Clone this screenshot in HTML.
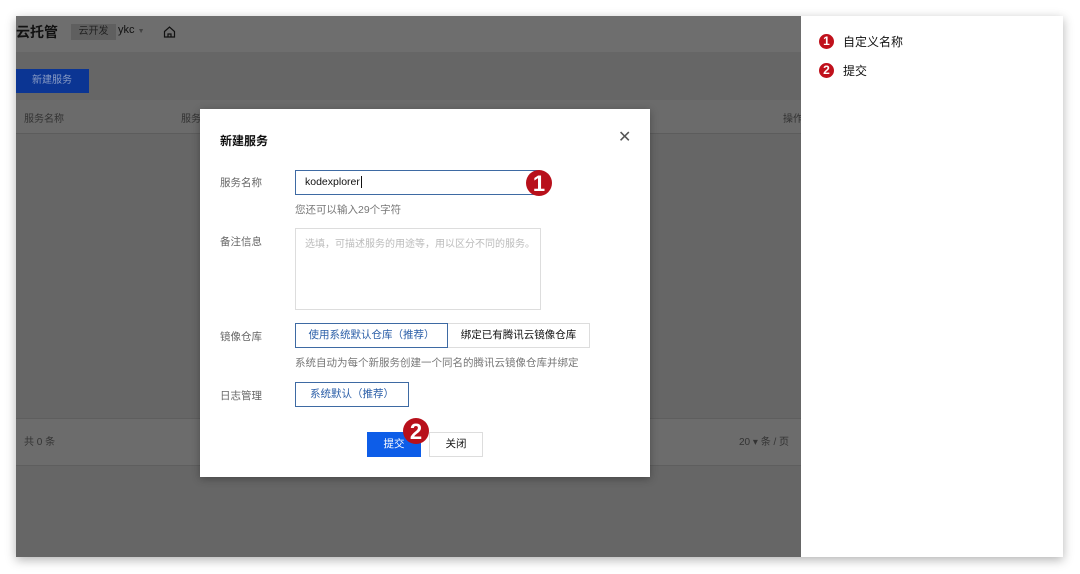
<!DOCTYPE html>
<html><head><meta charset="utf-8"><style>
*{margin:0;padding:0;box-sizing:border-box}
body{width:1080px;height:574px;background:#fff;position:relative;overflow:hidden;font-family:"Liberation Sans","Noto Sans CJK SC",sans-serif;}
.win{position:absolute;left:16px;top:16px;width:1047px;height:541px;box-shadow:0 3px 10px rgba(0,0,0,.3);background:#fff;overflow:hidden}
.gray{position:absolute;left:0;top:0;width:785px;height:541px;background:#666}
.abs{position:absolute;white-space:nowrap}
.side{position:absolute;left:785px;top:0;width:262px;height:541px;background:#fff}
.badge{position:absolute;width:26px;height:26px;border-radius:50%;background:#b8101b;color:#fff;font-weight:bold;font-size:22px;text-align:center;line-height:27px;font-family:"Liberation Sans",sans-serif}
.sb{position:absolute;width:15px;height:15px;border-radius:50%;background:#c0111c;color:#fff;font-weight:bold;font-size:12px;text-align:center;line-height:15px}
.dlg{position:absolute;left:200px;top:109px;width:450px;height:368px;background:#fff;box-shadow:0 2px 8px rgba(0,0,0,.3)}
.lbl{position:absolute;left:20px;font-size:10.5px;color:#666;white-space:nowrap}
.t{position:absolute;font-size:10.5px;white-space:nowrap}
</style></head><body>
<div class="win">
 <div class="gray">
  <div class="abs" style="left:0;top:0;width:785px;height:36px;background:#6e6e6e"></div>
  <div class="abs" style="left:0;top:6px;font-size:14px;font-weight:bold;color:#111">云托管</div>
  <div class="abs" style="left:55px;top:8px;width:45px;height:16px;background:#5f5f5f;font-size:10px;color:#222;text-align:center;line-height:16px">云开发</div>
  <div class="abs" style="left:102px;top:8px;font-size:11px;color:#111">ykc <span style="font-size:7px;color:#444">▼</span></div>
  <svg class="abs" style="left:147px;top:9px" width="13" height="13" viewBox="0 0 13 13"><path d="M1.5 6.5L6.5 2l5 4.5V12h-10z M5 12V9h3v3" fill="none" stroke="#111" stroke-width="1.2"/></svg>
  <div class="abs" style="left:0;top:53px;width:73px;height:24px;background:#0b3593;color:#8a9cc4;font-size:10px;line-height:24px;padding-left:16px">新建服务</div>
  <div class="abs" style="left:0;top:84px;width:785px;height:34px;background:#6b6b6b;border-bottom:1px solid #5c5c5c"></div>
  <div class="abs" style="left:8px;top:94px;font-size:10px;color:#333">服务名称</div>
  <div class="abs" style="left:165px;top:94px;font-size:10px;color:#333">服务</div>
  <div class="abs" style="left:767px;top:94px;font-size:10px;color:#333">操作</div>
  <div class="abs" style="left:0;top:402px;width:785px;height:48px;background:#6c6c6c;border-top:1px solid #5e5e5e;border-bottom:1px solid #5e5e5e"></div>
  <div class="abs" style="left:8px;top:417px;font-size:10px;color:#333">共 0 条</div>
  <div class="abs" style="left:723px;top:417px;font-size:10px;color:#333">20 ▾ 条 / 页</div>
 </div>
 <div class="side">
  <div class="sb" style="left:18px;top:18px">1</div>
  <div class="abs" style="left:42px;top:17px;font-size:12px;color:#111">自定义名称</div>
  <div class="sb" style="left:18px;top:47px">2</div>
  <div class="abs" style="left:42px;top:46px;font-size:12px;color:#111">提交</div>
 </div>
</div>
<div class="dlg">
 <div class="abs" style="left:20px;top:23px;font-size:12px;font-weight:bold;color:#111">新建服务</div>
 <div class="abs" style="left:418px;top:21px;font-size:16px;color:#555;line-height:16px">✕</div>
 <div class="lbl" style="top:66px">服务名称</div>
 <div class="abs" style="left:95px;top:61px;width:245px;height:25px;border:1px solid #3e6aa3;font-size:10.5px;color:#111;line-height:23px;padding-left:9px">kodexplorer<span style="border-left:1px solid #111;margin-left:1px"></span></div>
 <div class="t" style="left:95px;top:93px;color:#777">您还可以输入29个字符</div>
 <div class="lbl" style="top:125px">备注信息</div>
 <div class="abs" style="left:95px;top:119px;width:246px;height:82px;border:1px solid #ddd;font-size:10px;color:#bbb;padding:6px 9px;overflow:hidden">选填，可描述服务的用途等，用以区分不同的服务。</div>
 <div class="lbl" style="top:220px">镜像仓库</div>
 <div class="abs" style="left:95px;top:214px;width:153px;height:25px;border:1px solid #3e6aa3;font-size:10.5px;color:#2a5ea8;text-align:center;line-height:23px">使用系统默认仓库（推荐）</div>
 <div class="abs" style="left:248px;top:214px;width:142px;height:25px;border:1px solid #ddd;border-left:none;font-size:10.5px;color:#111;text-align:center;line-height:23px">绑定已有腾讯云镜像仓库</div>
 <div class="t" style="left:95px;top:246px;color:#777">系统自动为每个新服务创建一个同名的腾讯云镜像仓库并绑定</div>
 <div class="lbl" style="top:279px">日志管理</div>
 <div class="abs" style="left:95px;top:273px;width:114px;height:25px;border:1px solid #3e6aa3;font-size:10.5px;color:#2a5ea8;text-align:center;line-height:23px">系统默认（推荐）</div>
 <div class="abs" style="left:167px;top:323px;width:54px;height:25px;background:#0d5de8;color:#fff;font-size:10.5px;text-align:center;line-height:25px">提交</div>
 <div class="abs" style="left:229px;top:323px;width:54px;height:25px;border:1px solid #ddd;color:#111;font-size:10.5px;text-align:center;line-height:23px">关闭</div>
 <div class="badge" style="left:326px;top:61px">1</div>
 <div class="badge" style="left:203px;top:309px">2</div>
</div>
</body></html>
